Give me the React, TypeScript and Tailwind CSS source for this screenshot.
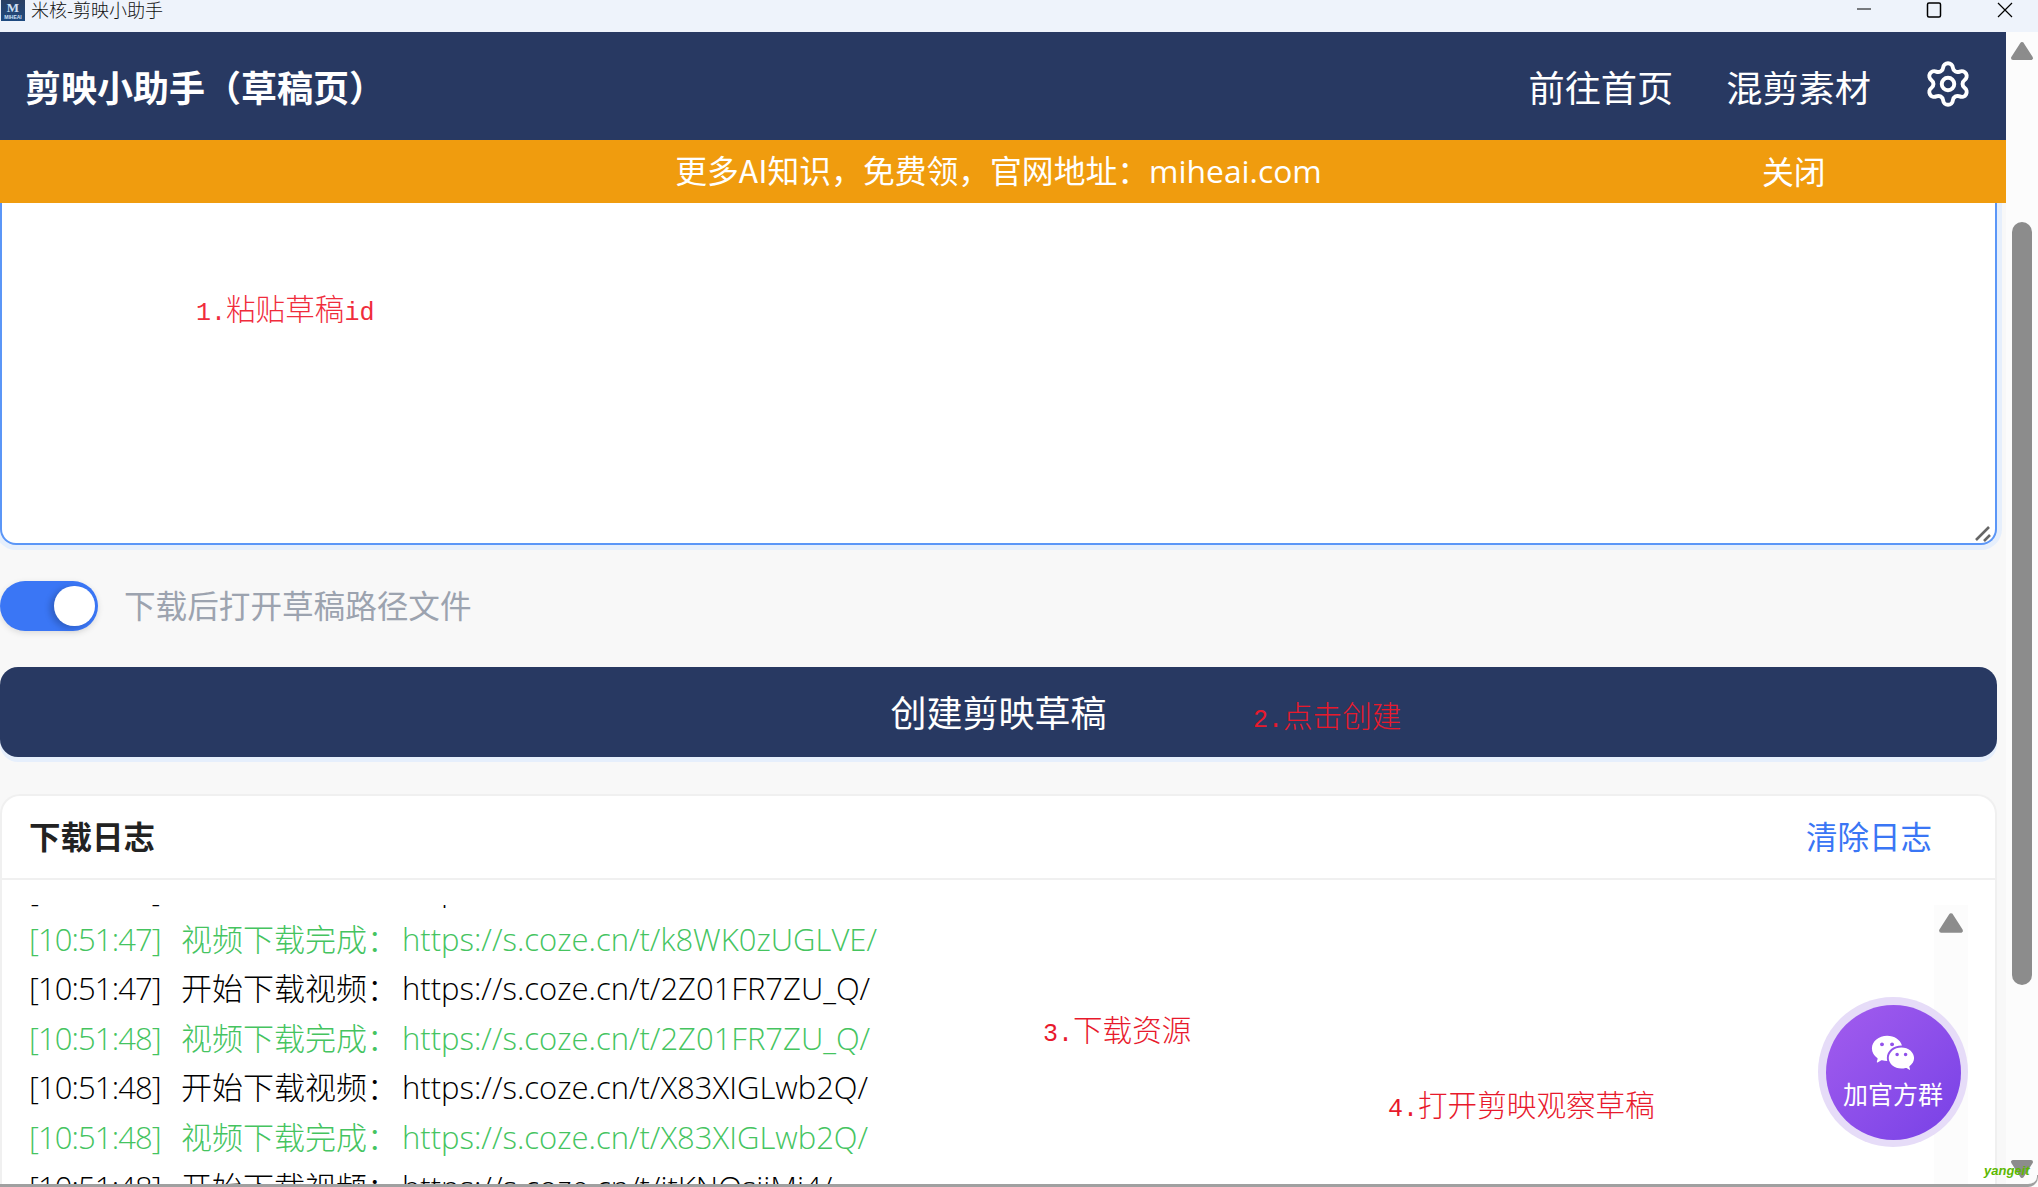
import { Settings } from 'lucide-react';
import { RiWechatFill } from 'react-icons/ri';

const cjk = '"Noto Sans CJK SC", sans-serif';
const latin = '"Open Sans", "Noto Sans CJK SC", sans-serif';

const logs = [
  { time: '10:51:47', label: '开始下载视频', url: 'https://s.coze.cn/t/k8WK0zUGLVE/', ok: false },
  { time: '10:51:47', label: '视频下载完成', url: 'https://s.coze.cn/t/k8WK0zUGLVE/', ok: true },
  { time: '10:51:47', label: '开始下载视频', url: 'https://s.coze.cn/t/2Z01FR7ZU_Q/', ok: false },
  { time: '10:51:48', label: '视频下载完成', url: 'https://s.coze.cn/t/2Z01FR7ZU_Q/', ok: true },
  { time: '10:51:48', label: '开始下载视频', url: 'https://s.coze.cn/t/X83XIGLwb2Q/', ok: false },
  { time: '10:51:48', label: '视频下载完成', url: 'https://s.coze.cn/t/X83XIGLwb2Q/', ok: true },
  { time: '10:51:48', label: '开始下载视频', url: 'https://s.coze.cn/t/jtKNQsjiMj4/', ok: false },
];

const Triangle = ({ down, className }: { down?: boolean; className?: string }) => (
  <svg viewBox="0 0 24 20" className={className}>
    <path
      d={down ? 'M3 3 H21 L12 17 Z' : 'M12 3 L21 17 H3 Z'}
      fill="#8c8c8c"
      stroke="#8c8c8c"
      strokeWidth="4"
      strokeLinejoin="round"
    />
  </svg>
);

const Note = ({ className, num, text, tail }: { className: string; num: string; text: string; tail?: string }) => (
  <span className={`absolute flex items-baseline text-[29.6px] leading-none font-extralight whitespace-nowrap ${className}`}>
    <span className="text-[25px]" style={{ fontFamily: '"Liberation Mono", monospace' }}>{num}</span>
    {text}
    {tail && <span className="text-[25px]" style={{ fontFamily: '"Liberation Mono", monospace' }}>{tail}</span>}
  </span>
);

export default function App() {
  return (
    <div
      className="relative flex h-[1187px] w-[2038px] flex-col overflow-hidden bg-[#f8f8f8]"
      style={{ fontFamily: cjk }}
    >
      {/* window title bar */}
      <div className="flex h-8 flex-none items-start bg-[#eef3fb]">
        <div className="ml-px flex h-[21px] w-[24px] flex-none flex-col items-center justify-center bg-gradient-to-b from-[#2a3f63] to-[#1d4a80] text-[#cfe0f5]">
          <span className="text-[13px] leading-[13px] font-bold" style={{ fontFamily: '"Liberation Serif", serif' }}>M</span>
          <span className="text-[5px] leading-[6px] font-bold" style={{ fontFamily: '"Liberation Sans", sans-serif' }}>MIHEAI</span>
        </div>
        <span className="ml-[6px] text-[18px] leading-[19px] font-light text-[#111]">米核-剪映小助手</span>
        <div className="ml-auto flex items-start">
          <svg viewBox="0 0 16 16" className="mr-[54px] mt-[1px] h-4 w-4 text-black">
            <path d="M1 8 H15" stroke="currentColor" strokeWidth="1" />
          </svg>
          <svg viewBox="0 0 16 16" className="mr-[55px] mt-[2px] h-4 w-4 text-black">
            <rect x="1.5" y="1" width="13" height="14" rx="1.5" fill="none" stroke="currentColor" strokeWidth="1.5" />
          </svg>
          <svg viewBox="0 0 16 16" className="mr-[25px] mt-[2px] h-4 w-4 text-black">
            <path d="M1 1 L15 15 M15 1 L1 15" stroke="currentColor" strokeWidth="1.2" />
          </svg>
        </div>
      </div>

      <div className="flex min-h-0 flex-1">
        {/* page */}
        <div className="flex w-[2006px] flex-none flex-col">
          <header className="flex h-[108px] flex-none items-center bg-[#283962] pl-[25px] text-white">
            <h1 className="pb-[1px] text-[36px] leading-none font-bold">剪映小助手（草稿页）</h1>
            <nav className="ml-auto flex items-center text-[36.2px] leading-none">
              <a>前往首页</a>
              <a className="ml-[53px]">混剪素材</a>
              <Settings className="ml-[52px] mb-1 h-[50px] w-[50px]" strokeWidth={1.9} />
            </nav>
            <div className="w-[33px]" />
          </header>

          <div className="relative flex h-[63px] flex-none items-center justify-center bg-[#f09c0e] pb-[2px] text-[31.8px] leading-none text-white">
            <span className="mr-[9px]">
              更多AI知识，免费领，官网地址：<span style={{ fontFamily: latin }}>miheai.com</span>
            </span>
            <span className="absolute left-[1762px]">关闭</span>
          </div>

          <main className="relative flex min-h-0 flex-1 flex-col overflow-hidden pr-[9px]">
            <div className="relative h-[342px] flex-none rounded-b-[16px] border-2 border-t-0 border-[#5b96f7] bg-white shadow-[0_0_0_5px_#e6effc]">
              <svg viewBox="0 0 20 20" className="absolute right-[1px] bottom-[-2px] h-5 w-5">
                <path d="M2 15 L15 2 M10 16 L16 10" stroke="#666" strokeWidth="2.6" />
              </svg>
            </div>

            <div className="mt-[36px] flex h-[50px] flex-none items-center">
              <div className="flex h-[50px] w-[98px] items-center justify-end rounded-full bg-[#3a76f5] pr-[3px] shadow-[0_2px_6px_rgba(0,0,0,0.12)]">
                <span className="h-[40px] w-[41px] rounded-full bg-white shadow-[-4px_2px_6px_rgba(0,0,0,0.2)]" />
              </div>
              <span className="ml-[26px] pb-[2px] text-[31.6px] leading-none text-[#9ca3af]">下载后打开草稿路径文件</span>
            </div>

            <button className="mt-[36px] h-[90px] flex-none rounded-[18px] bg-[#283962] pb-[2px] text-[36px] leading-none text-white shadow-[0_5px_0_#e6effc]">
              创建剪映草稿
            </button>

            <section className="mt-[37px] flex min-h-0 flex-1 flex-col rounded-t-[20px] border-2 border-b-0 border-[#f0f0f0] bg-white">
              <div className="flex h-[84px] flex-none items-center justify-between border-b-2 border-[#f0f0f0] pr-[63px] pb-[3px] pl-[27px]">
                <h2 className="text-[31.5px] leading-none font-bold text-[#222]">下载日志</h2>
                <button className="text-[31.5px] leading-none text-[#3a76f5]">清除日志</button>
              </div>
              <div className="flex min-h-0 flex-1 pt-[25px]">
                <div className="min-w-0 flex-1 overflow-hidden pl-[27px]">
                  <div className="mt-[-42px]">
                    {logs.map((log, i) => (
                      <div
                        key={i}
                        className={`flex h-[49.6px] items-baseline whitespace-nowrap text-[31px] leading-[49.6px] font-light ${log.ok ? 'text-[#45c45f]' : 'text-black'}`}
                      >
                        <span className="w-[152px] tracking-[-0.9px]" style={{ fontFamily: latin }}>
                          [{log.time}]
                        </span>
                        <span className="w-[221px]">{log.label}：</span>
                        <span style={{ fontFamily: latin }}>{log.url}</span>
                      </div>
                    ))}
                  </div>
                </div>
                <div className="mr-[27px] flex w-[34px] flex-none justify-center bg-[#fcfcfc] pt-[7px]">
                  <Triangle className="h-[22px] w-[26px]" />
                </div>
              </div>
            </section>

            {/* annotations drawn over the screenshot */}
            <Note className="left-[196px] top-[90px] text-[#f02c3c]" num="1." text="粘贴草稿" tail="id" />
            <Note className="left-[1253px] top-[497px] text-[#e8192c]" num="2." text="点击创建" />
            <Note className="left-[1043px] top-[811px] text-[#e8192c]" num="3." text="下载资源" />
            <Note className="left-[1388px] top-[886px] text-[#e8192c]" num="4." text="打开剪映观察草稿" />
          </main>
        </div>

        {/* page scrollbar */}
        <div className="flex w-[32px] flex-none flex-col items-center bg-[#fcfcfc] pt-[9px]">
          <Triangle className="h-[20px] w-[24px] flex-none" />
          <div className="mt-[161px] h-[763px] w-[20px] flex-none rounded-full bg-[#8c8c8c]" />
          <Triangle down className="mt-auto mb-[8px] h-[20px] w-[24px] flex-none" />
        </div>
      </div>

      {/* floating group button */}
      <div className="absolute left-[1818px] top-[997px] flex h-[150px] w-[150px] items-center justify-center rounded-full bg-[#e6dcf8]">
        <div className="flex h-[135px] w-[135px] flex-col items-center justify-center rounded-full bg-gradient-to-br from-[#a35cee] to-[#7840e6] pb-[7px] text-white">
          <RiWechatFill className="h-[46px] w-[46px]" />
          <span className="mt-[2px] text-[25px] leading-[30px]">加官方群</span>
        </div>
      </div>

      <span
        className="absolute left-[1984px] top-[1164px] text-[13px] leading-none font-bold text-[#5cb800] italic"
        style={{ fontFamily: '"Liberation Sans", sans-serif' }}
      >
        yangeit
      </span>
      {/* window bottom edge */}
      <div className="absolute right-0 bottom-0 left-0 h-[12px] rounded-br-[10px] border-r border-b-[3px] border-[#a0a0a0]" />
    </div>
  );
}
